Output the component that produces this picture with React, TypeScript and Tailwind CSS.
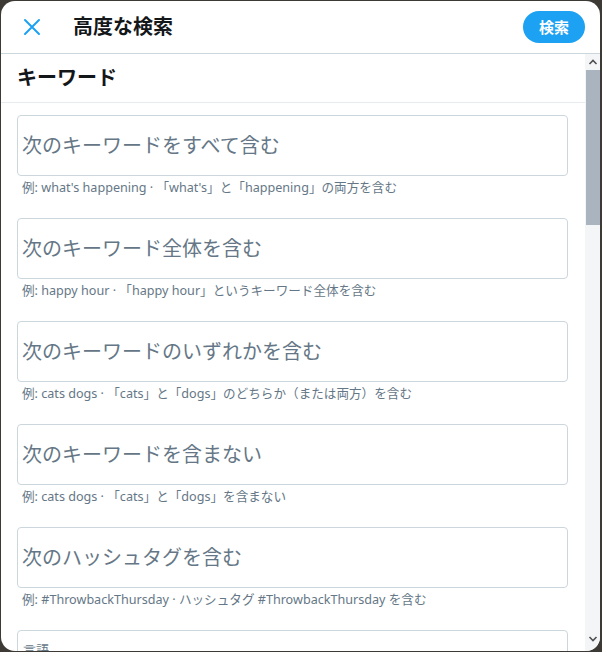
import React from 'react';

const FONT = '"Noto Sans", "Noto Sans CJK JP", sans-serif';

const FIELDS = [
  { placeholder: '次のキーワードをすべて含む', hint: '例: what\'s happening · 「what\'s」と「happening」の両方を含む' },
  { placeholder: '次のキーワード全体を含む', hint: '例: happy hour · 「happy hour」というキーワード全体を含む' },
  { placeholder: '次のキーワードのいずれかを含む', hint: '例: cats dogs · 「cats」と「dogs」のどちらか（または両方）を含む' },
  { placeholder: '次のキーワードを含まない', hint: '例: cats dogs · 「cats」と「dogs」を含まない' },
  { placeholder: '次のハッシュタグを含む', hint: '例: #ThrowbackThursday · ハッシュタグ #ThrowbackThursday を含む' },
];

function KeywordField({ placeholder, hint }: { placeholder: string; hint: string }) {
  return (
    <div className="mb-[22px]">
      <div className="h-[61px] rounded-[4px] border border-[#ccd6dd] flex items-center px-[4px]">
        <span className="text-[20px] text-[#657786] leading-none">{placeholder}</span>
      </div>
      <div className="mt-[4px] pl-[5px] text-[12.6px] leading-[16px] text-[#657786]">{hint}</div>
    </div>
  );
}

export default function App() {
  return (
    <div className="w-[602px] h-[652px] bg-[#3d3a36] p-px overflow-hidden" style={{ fontFamily: FONT }}>
      <div className="w-[599px] h-[650px] bg-white rounded-[14px] overflow-hidden flex flex-col">
        <header className="h-[53px] shrink-0 flex items-center border-b border-[#ccd6dd] pl-[22px] pr-[15px]">
          <svg width="18" height="18" viewBox="0 0 18 18" className="shrink-0">
            <path d="M2 2 L16 16 M16 2 L2 16" stroke="#1da1f2" strokeWidth="2" strokeLinecap="round" />
          </svg>
          <h1 className="ml-[32px] text-[20px] font-bold text-[#14171a] leading-none">高度な検索</h1>
          <button
            type="button"
            className="ml-auto h-[32px] w-[62px] rounded-full bg-[#1da1f2] text-white text-[15px] font-bold leading-none"
          >
            検索
          </button>
        </header>

        <div className="flex-1 flex min-h-0">
          <div className="flex-1 min-w-0 overflow-hidden">
            <div className="h-[49px] flex items-center px-[16px] border-b border-[#e6ecf0]">
              <h2 className="text-[20px] font-bold text-[#14171a] leading-none">キーワード</h2>
            </div>
            <div className="pt-[12px] pl-[16px] pr-[17px]">
              {FIELDS.map((f) => (
                <KeywordField key={f.placeholder} placeholder={f.placeholder} hint={f.hint} />
              ))}
              <div className="h-[40px] rounded-[4px] border border-[#ccd6dd] px-[5px] pt-[6px]">
                <span className="text-[13px] text-[#657786]">言語</span>
              </div>
            </div>
          </div>

          <div className="w-[15px] shrink-0 bg-[#f3f5f7] flex flex-col items-center">
            <svg width="10" height="16" viewBox="0 0 10 16" className="shrink-0">
              <path d="M1.5 10 L5 6.5 L8.5 10" fill="none" stroke="#505050" strokeWidth="1.6" />
            </svg>
            <div className="w-[14px] h-[155px] bg-[#a9b4bf]" />
            <div className="flex-1" />
            <svg width="10" height="16" viewBox="0 0 10 16" className="shrink-0 mb-[4px]">
              <path d="M1.5 6 L5 9.5 L8.5 6" fill="none" stroke="#505050" strokeWidth="1.6" />
            </svg>
          </div>
        </div>
      </div>
    </div>
  );
}
